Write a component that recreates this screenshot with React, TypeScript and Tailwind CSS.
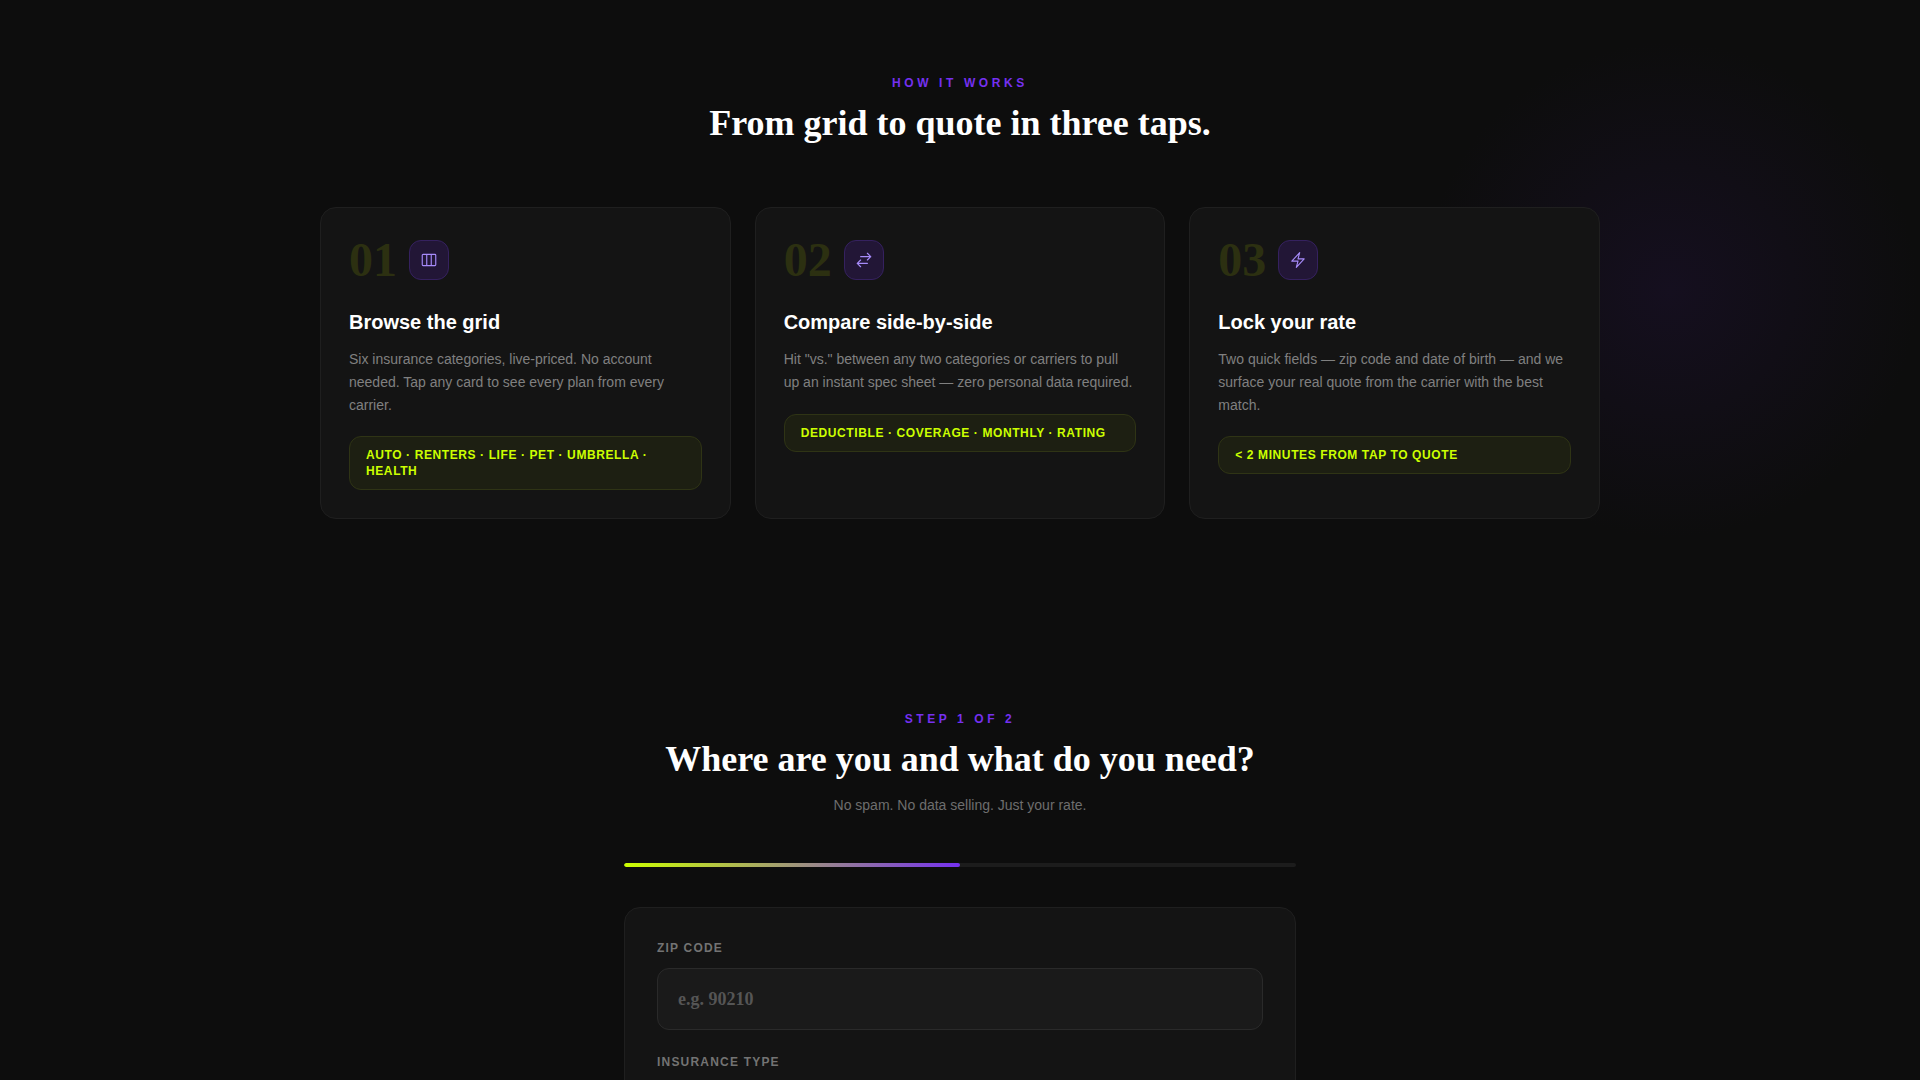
import type { ReactNode } from 'react';
import {
  HiOutlineArrowsRightLeft,
  HiOutlineBolt,
  HiOutlineViewColumns,
} from 'react-icons/hi2';

interface Step {
  number: string;
  icon: ReactNode;
  title: string;
  description: string;
  note: string;
}

const STEPS: Step[] = [
  {
    number: '01',
    icon: <HiOutlineViewColumns className="h-[18px] w-[18px]" />,
    title: 'Browse the grid',
    description:
      'Six insurance categories, live-priced. No account needed. Tap any card to see every plan from every carrier.',
    note: 'AUTO · RENTERS · LIFE · PET · UMBRELLA · HEALTH',
  },
  {
    number: '02',
    icon: <HiOutlineArrowsRightLeft className="h-[18px] w-[18px]" />,
    title: 'Compare side-by-side',
    description:
      'Hit "vs." between any two categories or carriers to pull up an instant spec sheet — zero personal data required.',
    note: 'DEDUCTIBLE · COVERAGE · MONTHLY · RATING',
  },
  {
    number: '03',
    icon: <HiOutlineBolt className="h-[18px] w-[18px]" />,
    title: 'Lock your rate',
    description:
      'Two quick fields — zip code and date of birth — and we surface your real quote from the carrier with the best match.',
    note: '< 2 MINUTES FROM TAP TO QUOTE',
  },
];

const INSURANCE_TYPES = ['Auto', 'Renters', 'Life', 'Pet', 'Umbrella', 'Health'];

function SectionHeading({ eyebrow, title }: { eyebrow: string; title: string }) {
  return (
    <>
      <p className="mb-3 text-xs font-bold tracking-[0.3em] text-[#7530f0]">{eyebrow}</p>
      <h2 className="font-['Liberation_Serif',serif] text-4xl font-bold text-white">{title}</h2>
    </>
  );
}

function StepCard({ step }: { step: Step }) {
  return (
    <article className="rounded-2xl border border-[#1f1f1f] bg-[#141414] p-7">
      <div className="mb-6 flex items-center gap-3">
        <span className="font-['Liberation_Serif',serif] text-5xl leading-none font-bold text-[#2c3011]">
          {step.number}
        </span>
        <div className="flex h-10 w-10 items-center justify-center rounded-xl border border-[#35215f] bg-[#221636] text-[#a78bfa]">
          {step.icon}
        </div>
      </div>
      <h3 className="mb-3 text-xl font-bold text-white">{step.title}</h3>
      <p className="mb-5 text-sm leading-relaxed text-[#808080]">{step.description}</p>
      <div className="rounded-xl border border-[#2f3415] bg-[#1d1f12] px-4 py-2.5 text-xs font-bold tracking-wider text-[#ccff00]">
        {step.note}
      </div>
    </article>
  );
}

function HowItWorks() {
  return (
    <section className="relative px-6 pt-[75px] pb-24">
      {/* purple glow behind the last card */}
      <div className="pointer-events-none absolute top-10 right-0 h-[500px] w-[500px] bg-[radial-gradient(circle,#150f1f_0%,#0d0d0d_70%)]" />
      <div className="relative mx-auto max-w-7xl">
        <header className="mb-16 text-center">
          <SectionHeading eyebrow="HOW IT WORKS" title="From grid to quote in three taps." />
        </header>
        <div className="grid gap-6 md:grid-cols-3">
          {STEPS.map((step) => (
            <StepCard key={step.number} step={step} />
          ))}
        </div>
      </div>
    </section>
  );
}

function QuoteForm() {
  return (
    <section className="px-6 py-24">
      <div className="mx-auto max-w-2xl">
        <header className="mb-12 text-center">
          <SectionHeading eyebrow="STEP 1 OF 2" title="Where are you and what do you need?" />
          <p className="mt-4 text-sm text-[#6e6e6e]">No spam. No data selling. Just your rate.</p>
        </header>

        <div className="mb-10 h-1 overflow-hidden rounded-full bg-[#1c1c1c]">
          <div className="h-full w-1/2 rounded-full bg-linear-to-r/srgb from-[#ccff00] to-[#7530f0]" />
        </div>

        <form className="rounded-2xl border border-[#1f1f1f] bg-[#141414] p-8">
          <label htmlFor="zip" className="mb-3 block text-xs font-bold tracking-widest text-[#737373]">
            ZIP CODE
          </label>
          <input
            id="zip"
            type="text"
            inputMode="numeric"
            placeholder="e.g. 90210"
            className="mb-6 block w-full rounded-xl border border-[#2a2a2a] bg-[#1a1a1a] px-5 py-4 font-['Liberation_Serif',serif] text-lg font-bold text-white placeholder:text-[#555555]"
          />
          <label htmlFor="type" className="mb-3 block text-xs font-bold tracking-widest text-[#737373]">
            INSURANCE TYPE
          </label>
          <select
            id="type"
            className="block w-full rounded-xl border border-[#2a2a2a] bg-[#1a1a1a] px-5 py-4 text-white"
          >
            {INSURANCE_TYPES.map((type) => (
              <option key={type}>{type}</option>
            ))}
          </select>
        </form>
      </div>
    </section>
  );
}

export default function App() {
  return (
    <main className="h-screen overflow-hidden bg-[#0d0d0d] font-['Liberation_Sans',sans-serif]">
      <HowItWorks />
      <QuoteForm />
    </main>
  );
}
